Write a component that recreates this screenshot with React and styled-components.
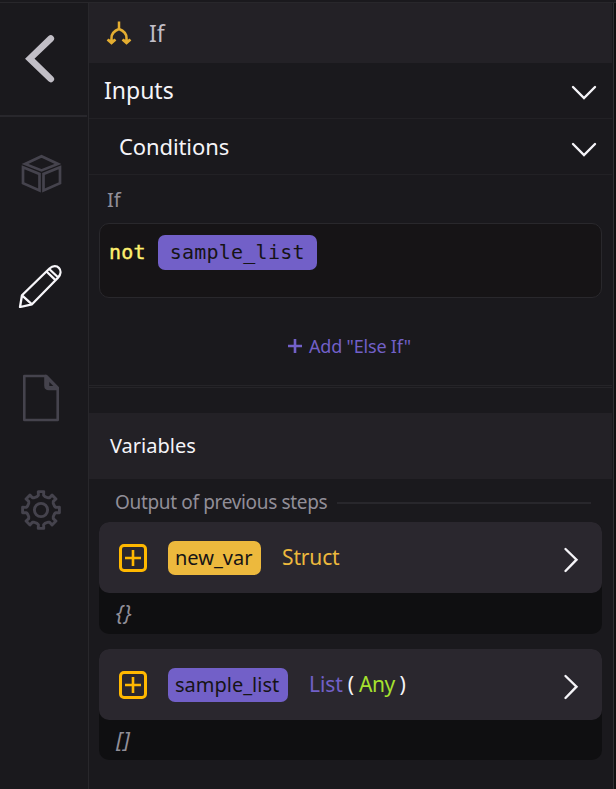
import React from "react";
import styled, { createGlobalStyle } from "styled-components";

const Global = createGlobalStyle`
  *, *::before, *::after { box-sizing: border-box; }
  body { margin: 0; background: #1a191d; overflow: hidden; }
`;

const Page = styled.div`
  display: flex;
  flex-direction: column;
  width: 616px;
  height: 789px;
  background: #1a191d;
  font-family: "Noto Sans", "Open Sans", sans-serif;
  color: #f5f4f8;
`;

const TopEdge = styled.div`
  flex: none;
  height: 3px;
  border-bottom: 1px solid #28272b;
`;

const Columns = styled.div`
  display: grid;
  grid-template-columns: 88px 525px 3px;
  flex: 1;
  min-height: 0;
`;

const Sidebar = styled.nav`
  display: flex;
  flex-direction: column;
  padding-right: 1px;
`;

const BackButton = styled.button`
  height: 114px;
  padding: 0;
  border: 0;
  border-bottom: 2px solid #28272c;
  background: none;
`;

const Tool = styled.button`
  display: flex;
  align-items: center;
  justify-content: center;
  height: 112px;
  padding: 2px 5px 0 0;
  border: 0;
  background: none;
  color: ${(p) => (p.$active ? "#f7f6fa" : "#45434d")};
`;

const Icon = styled.svg`
  display: block;
  flex: none;
  fill: none;
  stroke: currentColor;
`;

const Main = styled.main`
  display: flex;
  flex-direction: column;
  min-width: 0;
  padding-right: 1px;
  border-left: 1px solid #28272b;
`;

const Gutter = styled.div`
  border-left: 1px solid #303033;
  background: #101011;
`;

const Text = styled.span`
  font-size: ${(p) => p.$size}px;
  letter-spacing: ${(p) => p.$track || 0}px;
  line-height: 1.36;
  white-space: pre;
  color: ${(p) => p.$color || "#f5f4f8"};
  font-style: ${(p) => (p.$italic ? "italic" : "normal")};
`;

const StepHeader = styled.header`
  display: flex;
  align-items: center;
  gap: 17px;
  height: 60px;
  padding: 1px 0 0 17px;
  background: #232126;
`;

const SectionRow = styled.div`
  display: flex;
  align-items: center;
  justify-content: space-between;
  height: 56px;
  padding: 0 15px 0 ${(p) => (p.$nested ? 30 : 15)}px;
  border-bottom: 1px solid #222125;
  svg { margin-top: ${(p) => (p.$nested ? 7 : 5)}px; }
`;

const Conditions = styled.section`
  display: flex;
  flex-direction: column;
  height: 213px;
  padding: 11px 10px 0;
  border-bottom: 3px double #252428;
`;

const FieldLabel = styled.label`
  height: 37px;
  padding-left: 8px;
`;

const CodeField = styled.div`
  display: flex;
  align-items: flex-start;
  gap: 12px;
  height: 75px;
  padding: 11px 9px;
  border: 1px solid #29282c;
  border-radius: 10px;
  background: #161416;
  font-family: "DejaVu Sans Mono", monospace;
  font-size: 20px;
  line-height: 35px;
  letter-spacing: 0.22px;
`;

const Keyword = styled.span`
  color: #fff06e;
  -webkit-text-stroke: 0.4px currentColor;
`;

const CodeVar = styled.span`
  width: 159px;
  padding-left: 12px;
  border-radius: 7px;
  background: #7260c8;
  color: #161416;
`;

const AddButton = styled.button`
  display: flex;
  align-items: center;
  align-self: center;
  gap: 7px;
  height: 36px;
  margin: 30px 2px 0 0;
  padding: 0;
  border: 0;
  background: none;
  color: #7260c8;
  font-family: inherit;
`;

const VariablesHeader = styled.h2`
  display: flex;
  align-items: center;
  height: 66px;
  margin: 25px 0 0;
  padding-left: 21px;
  background: #232126;
  font-weight: 400;
`;

const GroupTitle = styled.div`
  display: flex;
  align-items: center;
  gap: 10px;
  height: 43px;
  padding: 5px 21px 0 26px;
  &::after {
    content: "";
    flex: 1;
    height: 2px;
    background: #28272c;
  }
`;

const CardHead = styled.div`
  display: flex;
  align-items: center;
  height: 71px;
  padding: 0 23px 0 20px;
  border-radius: 10px;
  background: #2a272e;
  > svg:last-child { margin-top: 5px; }
`;

const VariableCard = styled.article`
  height: ${(p) => p.$height}px;
  margin: 0 10px 15px;
  border-radius: 10px;
  background: #0f0f11;
  & + & ${CardHead} { padding-bottom: 2px; }
  & + & ${CardHead} > svg:last-child { margin-top: 7px; }
`;

const Tag = styled.span`
  display: flex;
  align-items: center;
  width: ${(p) => p.$width}px;
  height: 34px;
  margin: 0 21px;
  padding-left: 7px;
  border-radius: 7px;
  background: ${(p) => p.$color};
`;

const TypeName = styled.span`
  display: flex;
  flex: 1;
  align-items: center;
  gap: 5px;
`;

const Preview = styled.div`
  height: 41px;
  padding: 5px 17px;
`;

const Chevron = ({ right }) => (
  <Icon width={right ? 16 : 26} height={right ? 26 : 16} strokeWidth="2.4">
    <path d={right ? "M2.5 2L13.5 12.7L2.5 24" : "M2 2L13 13L24 2"} strokeLinecap="round" />
  </Icon>
);

// Eight evenly spaced teeth around the hub.
const gearOutline = (() => {
  const points = [];
  for (let i = 0; i < 8; i++) {
    [[-16, 14], [-10, 15], [-8.5, 18.6], [8.5, 18.6], [10, 15], [16, 14]].forEach(([deg, r]) => {
      const a = ((i * 45 - 90 + deg) * Math.PI) / 180;
      points.push(`${(20 + r * Math.cos(a)).toFixed(2)} ${(20 + r * Math.sin(a)).toFixed(2)}`);
    });
  }
  return `M${points.join("L")}Z`;
})();

const Cube = () => (
  <Icon width="42" height="40" viewBox="-1 0 42 40" strokeWidth="2.7">
    <path d="M4 10L20.5 2.2L37 10L20.5 16.4ZM2 13.2L18.5 20V36.5L2 29.2ZM39 13.2L22.5 20V36.5L39 29.2Z" />
  </Icon>
);

const Pencil = () => (
  <Icon width="46" height="44" viewBox="0 -1 46 44" strokeWidth="2.3" strokeLinejoin="round">
    <path d="M2 42L4 30.3L31.5 3.5C35 .2 39 .8 41 3C43.2 5.5 43 9.5 40 12.7L14 39.3ZM4 30.3L14 39.3M28.5 6.5L38 15.7M31.2 4L40.8 13" />
  </Icon>
);

const Document = () => (
  <Icon width="38" height="48" strokeWidth="2.6" strokeLinejoin="round">
    <path d="M2.3 2H24L35.7 14V46H2.3Z" />
    <path d="M23.5 2V11.5Q23.5 15 27 15H35.7V14L24 2Z" fill="currentColor" />
    <path d="M27.3 8V12H31.3Z" fill="#1a191d" stroke="none" />
  </Icon>
);

const Gear = () => (
  <Icon width="40" height="40" strokeWidth="2.9" strokeLinejoin="round">
    <path d={gearOutline} />
    <circle cx="20" cy="20" r="6.6" />
  </Icon>
);

const Branch = () => (
  <Icon width="26" height="26" viewBox="0 1 26 26" color="#e3ad31" strokeWidth="2.5">
    <path d="M13 1.5V9M5.5 22V18C5.5 13 9 10.5 13 9C17 10.5 20.5 13 20.5 18V22" />
    <path d="M1.5 19.5L5.5 23L9.5 19.5M16.5 19.5L20.5 23L24.5 19.5" />
    <path d="M3 20H8L5.5 23ZM18 20H23L20.5 23Z" fill="currentColor" strokeWidth="1" />
  </Icon>
);

const PlusBox = () => (
  <Icon width="28" height="28" color="#ffb800">
    <rect x="1.5" y="1.5" width="25" height="25" rx="3.5" strokeWidth="3" />
    <path d="M14 6V22M6 14H22" strokeWidth="2.6" />
  </Icon>
);

export default function App() {
  return (
    <>
      <Global />
      <Page>
        <TopEdge />
        <Columns>
          <Sidebar>
            <BackButton aria-label="Back">
              <Icon width="87" height="112" color="#c1bec6" strokeWidth="6.6">
                <path d="M50.8 35.5L29.8 55.7L50.8 76" strokeLinecap="round" />
              </Icon>
            </BackButton>
            <Tool aria-label="Blocks"><Cube /></Tool>
            <Tool aria-label="Edit" $active><Pencil /></Tool>
            <Tool aria-label="Document"><Document /></Tool>
            <Tool aria-label="Settings"><Gear /></Tool>
          </Sidebar>
          <Main>
            <StepHeader>
              <Branch />
              <Text $size={23} $color="#c1bec6">If</Text>
            </StepHeader>
            <SectionRow><Text $size={23}>Inputs</Text><Chevron /></SectionRow>
            <SectionRow $nested><Text $size={22} $track={-0.1}>Conditions</Text><Chevron /></SectionRow>
            <Conditions>
              <FieldLabel><Text $size={20} $color="#918e98">If</Text></FieldLabel>
              <CodeField><Keyword>not</Keyword><CodeVar>sample_list</CodeVar></CodeField>
              <AddButton>
                <Icon width="14" height="14" strokeWidth="2.6"><path d="M7 0V14M0 7H14" /></Icon>
                <Text $size={18} $track={-0.2} $color="#7260c8">Add "Else If"</Text>
              </AddButton>
            </Conditions>
            <VariablesHeader><Text $size={20}>Variables</Text></VariablesHeader>
            <GroupTitle><Text $size={19} $track={-0.34} $color="#918e98">Output of previous steps</Text></GroupTitle>
            <VariableCard $height={112}>
              <CardHead>
                <PlusBox />
                <Tag $width={93} $color="#edb93d"><Text $size={20} $color="#161416">new_var</Text></Tag>
                <TypeName><Text $size={21} $track={-0.15} $color="#edb93d">Struct</Text></TypeName>
                <Chevron right />
              </CardHead>
              <Preview><Text $size={22} $color="#918e98" $italic>{"{}"}</Text></Preview>
            </VariableCard>
            <VariableCard $height={111}>
              <CardHead>
                <PlusBox />
                <Tag $width={120} $color="#7260c8"><Text $size={20} $color="#161416">sample_list</Text></Tag>
                <TypeName>
                  <Text $size={21} $track={-0.1} $color="#7260c8">List</Text>
                  <Text $size={21}>(</Text>
                  <Text $size={21} $track={-0.5} $color="#a6e22e">Any</Text>
                  <Text $size={21}>)</Text>
                </TypeName>
                <Chevron right />
              </CardHead>
              <Preview><Text $size={22} $track={1} $color="#918e98" $italic>[]</Text></Preview>
            </VariableCard>
          </Main>
          <Gutter />
        </Columns>
      </Page>
    </>
  );
}
